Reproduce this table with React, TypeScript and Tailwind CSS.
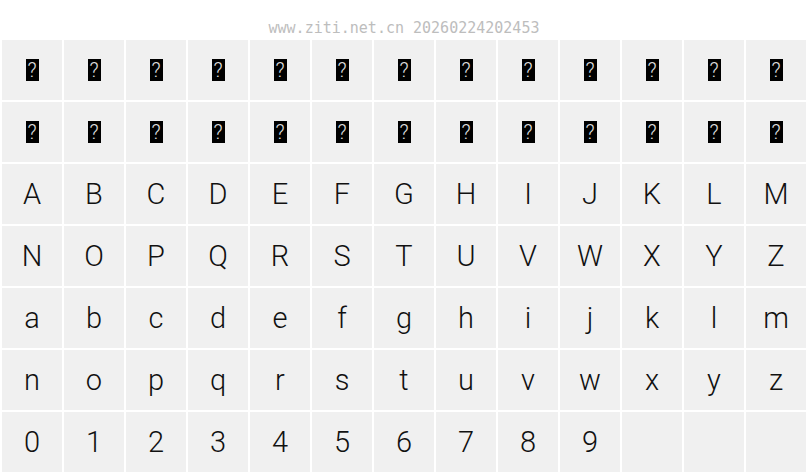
const upper = "ABCDEFGHIJKLMNOPQRSTUVWXYZ".split("");
const lower = "abcdefghijklmnopqrstuvwxyz".split("");
const digits = "0123456789".split("");

const Tofu = () => (
  <span className="flex h-[22px] w-[13px] items-center justify-center overflow-hidden bg-black text-[20px] font-light leading-none text-[#e0e0e0] [font-family:Roboto,sans-serif]">
    ?
  </span>
);

const Cell = ({ children }: { children?: React.ReactNode }) => (
  <div className="flex h-[60px] items-center justify-center bg-[#f0f0f0] text-[29px] font-light leading-none text-[#111] [font-family:Roboto,sans-serif]">
    {children}
  </div>
);

export default function App() {
  const glyphs: (string | null)[] = [...upper, ...lower, ...digits, null, null, null];

  return (
    <div className="h-[476px] w-[808px] bg-white">
      <div className="flex h-[40px] items-end justify-center pb-[4px] text-[15px] leading-none text-[#bdbdbd] [font-family:'DejaVu_Sans_Mono',monospace]">
        www.ziti.net.cn 20260224202453
      </div>
      <div className="grid grid-cols-[repeat(13,60px)] gap-[2px] pl-[2px]">
        {Array.from({ length: 26 }).map((_, i) => (
          <Cell key={"t" + i}>
            <Tofu />
          </Cell>
        ))}
        {glyphs.map((g, i) => (
          <Cell key={i}>{g}</Cell>
        ))}
      </div>
    </div>
  );
}
